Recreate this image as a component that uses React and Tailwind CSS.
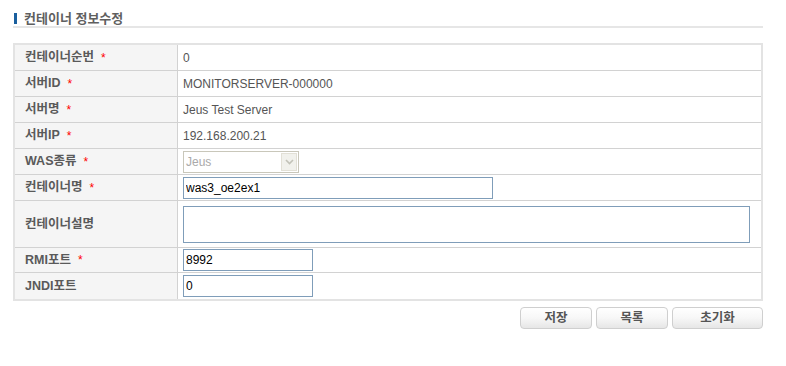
import React from "react";

const font = { fontFamily: '"Liberation Sans", "Noto Sans CJK KR", sans-serif' };

function Star() {
  return <span className="ml-[7px] text-[#ff0000] font-normal text-[12px]">*</span>;
}

function Row({ label, req, children, h = "h-[26px]", last }) {
  return (
    <div className={`flex ${h} ${last ? "" : "border-b border-[#d2d2d2]"}`}>
      <div className="w-[163px] shrink-0 bg-[#f5f5f5] border-r border-[#d2d2d2] flex items-center pl-[10px] text-[12.5px] font-bold text-[#5a5a5a]">
        {label}
        {req && <Star />}
      </div>
      <div className="flex-1 flex items-center pl-[5px] text-[12px] text-[#555555]">{children}</div>
    </div>
  );
}

function Btn({ children, w }) {
  return (
    <button
      className={`${w} h-[22px] rounded-[4px] border border-[#cfcfcf] bg-gradient-to-b from-[#ffffff] via-[#f7f7f7] to-[#e6e6e6] text-[12.5px] font-bold text-[#555555] flex items-center justify-center`}
    >
      {children}
    </button>
  );
}

export default function App() {
  return (
    <div className="w-[786px] h-[366px] bg-white" style={font}>
      <div className="pt-[12px] pl-[13px] w-[763px]">
        <div className="flex items-center h-[12px] pl-[1px]">
          <div className="w-[3px] h-[11px] bg-[#1a5f9e]" />
          <div className="ml-[7px] text-[13px] font-bold text-[#5f5f5f] leading-none">컨테이너 정보수정</div>
        </div>
        <div className="mt-[2px] h-[2px] w-[750px] bg-[#e6e6e6]" />

        <div className="mt-[15px] w-[750px] border-2 border-[#e3e3e3]">
          <Row label="컨테이너순번" req>0</Row>
          <Row label="서버ID" req>MONITORSERVER-000000</Row>
          <Row label="서버명" req>Jeus Test Server</Row>
          <Row label="서버IP" req>192.168.200.21</Row>
          <Row label="WAS종류" req>
            <div className="w-[116px] h-[22px] border border-[#c9c7ba] bg-white flex items-center">
              <span className="flex-1 pl-[2px] text-[12px] text-[#aaaaaa]">Jeus</span>
              <div className="w-[16px] h-[18px] mr-[1px] bg-[#f1f1ec] border border-[#e2e0d6] flex items-center justify-center">
                <svg width="9" height="6" viewBox="0 0 9 6">
                  <path d="M1 1 L4.5 4.5 L8 1" stroke="#c2c2b8" strokeWidth="1.6" fill="none" />
                </svg>
              </div>
            </div>
          </Row>
          <Row label="컨테이너명" req>
            <input
              defaultValue="was3_oe2ex1"
              className="w-[310px] h-[22px] border border-[#7f9db9] px-[2px] text-[12px] text-black outline-none"
              style={font}
            />
          </Row>
          <Row label="컨테이너설명" h="h-[47px]">
            <textarea className="w-[567px] h-[37px] border border-[#7f9db9] resize-none outline-none" />
          </Row>
          <Row label="RMI포트" req h="h-[25px]">
            <input
              defaultValue="8992"
              className="w-[130px] h-[22px] border border-[#7f9db9] px-[2px] text-[12px] text-black outline-none"
              style={font}
            />
          </Row>
          <Row label="JNDI포트" last h="h-[26px]">
            <input
              defaultValue="0"
              className="w-[130px] h-[22px] border border-[#7f9db9] px-[2px] text-[12px] text-black outline-none"
              style={font}
            />
          </Row>
        </div>

        <div className="mt-[6px] w-[750px] flex justify-end gap-[4px]">
          <Btn w="w-[72px]">저장</Btn>
          <Btn w="w-[72px]">목록</Btn>
          <Btn w="w-[91px]">초기화</Btn>
        </div>
      </div>
    </div>
  );
}
